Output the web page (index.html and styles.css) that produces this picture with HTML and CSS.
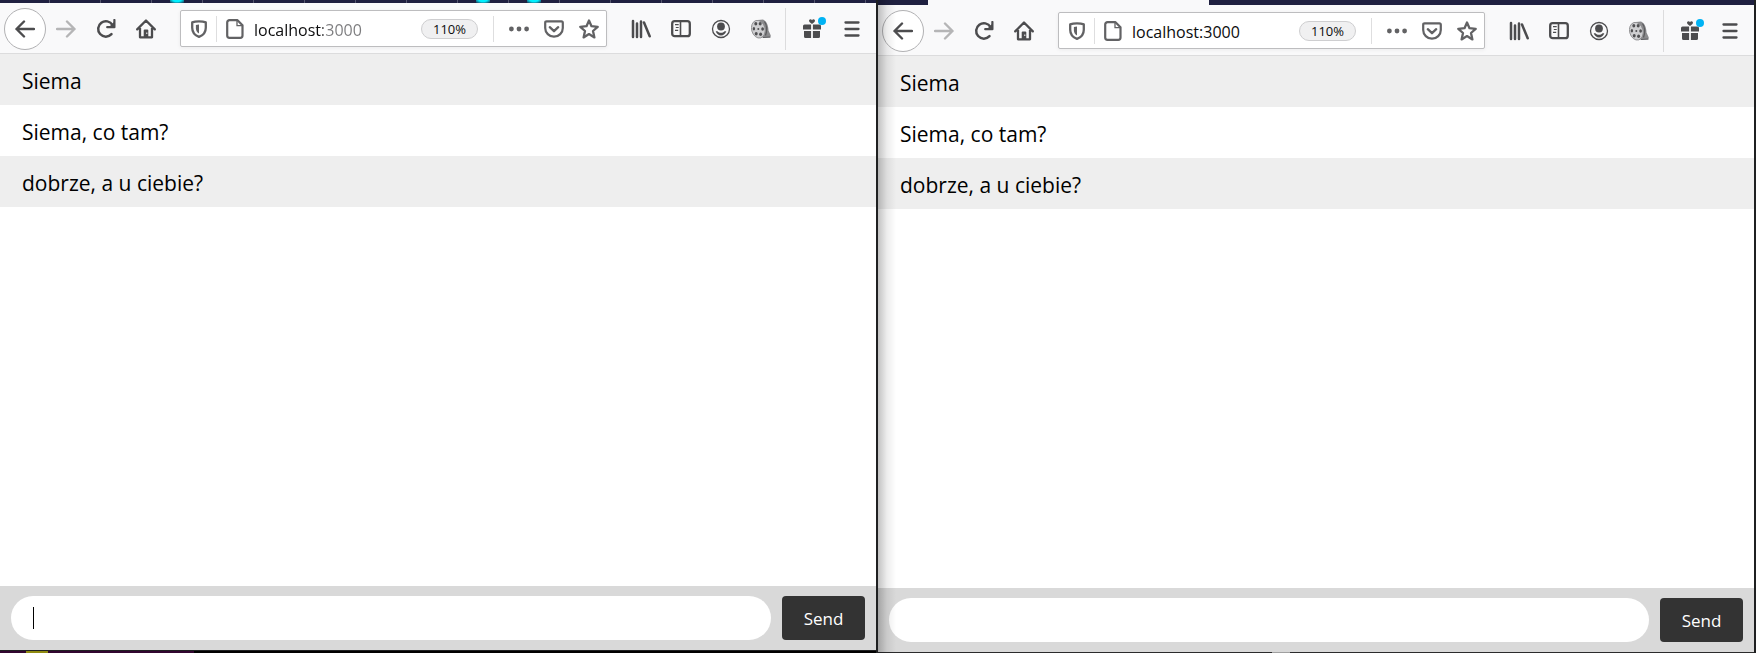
FILE: index.html
```html
<!DOCTYPE html>
<html lang="pl">
<head>
<meta charset="utf-8">
<title>Chat</title>
<link rel="stylesheet" href="styles.css">
</head>
<body>
<svg class="sprite" aria-hidden="true">
  <symbol id="i-back" viewBox="0 0 20 20"><path d="M19 10H1.500M9 2.500L1.500 10L9 17.500" fill="none" stroke="currentColor" stroke-width="2.400" stroke-linecap="round" stroke-linejoin="round"/></symbol>
  <symbol id="i-forward" viewBox="0 0 20 20"><path d="M1 10H18.500M11 2.500L18.500 10L11 17.500" fill="none" stroke="currentColor" stroke-width="2.400" stroke-linecap="round" stroke-linejoin="round"/></symbol>
  <symbol id="i-reload" viewBox="0 0 20 20"><path d="M15.500 15.200A7.700 7.700 0 1 1 16.500 6" fill="none" stroke="currentColor" stroke-width="2.500" stroke-linecap="round"/><path d="M18.400 1V8.200H11.200" fill="none" stroke="currentColor" stroke-width="2.200" stroke-linecap="round" stroke-linejoin="round"/><path d="M18 3v5h-5z" fill="currentColor"/></symbol>
  <symbol id="i-home" viewBox="0 0 20 20"><path d="M1.200 10.400L10 1.500L18.800 10.400M4 9V18.300H16V9" fill="none" stroke="currentColor" stroke-width="2.300" stroke-linecap="round" stroke-linejoin="round"/><path d="M7.700 18v-6.500q0-1 1-1h2.600q1 0 1 1V18z" fill="currentColor"/><path d="M10.300 13.500h1v1.500h-1z" fill="#f9f9fa"/></symbol>
  <symbol id="i-shield" viewBox="0 0 20 20"><path d="M10 2.300c2.500 0 4.900.300 6.800 1.100v5.400c0 4.700-2.900 7.700-6.800 9.100c-3.900-1.400-6.800-4.400-6.800-9.100v-5.400C5.100 2.600 7.500 2.300 10 2.300z" fill="none" stroke="currentColor" stroke-width="2.300" stroke-linejoin="round"/><path d="M10 5.500v9c-2.200-1.300-3.100-3.100-3.100-5.300V6z" fill="currentColor"/></symbol>
  <symbol id="i-page" viewBox="0 0 20 20"><path d="M4.500 1.200h8l5 5v10.300a2.300 2.300 0 0 1-2.300 2.300H4.500a2.300 2.300 0 0 1-2.300-2.300v-13a2.300 2.300 0 0 1 2.300-2.300z" fill="none" stroke="currentColor" stroke-width="2.200" stroke-linejoin="round"/><path d="M12 2v4.700h5" fill="none" stroke="currentColor" stroke-width="1.300"/></symbol>
  <symbol id="i-dots" viewBox="0 0 20 20"><circle cx="2.400" cy="10" r="2.400" fill="currentColor"/><circle cx="10" cy="10" r="2.400" fill="currentColor"/><circle cx="17.600" cy="10" r="2.400" fill="currentColor"/></symbol>
  <symbol id="i-pocket" viewBox="0 0 20 20"><path d="M2.600 2.300h14.800q1.400 0 1.400 1.400v5.200a8.800 8.800 0 0 1-17.600 0V3.700q0-1.400 1.400-1.400z" fill="none" stroke="currentColor" stroke-width="2.200"/><path d="M5.800 8.200L10 12.200L14.200 8.200" fill="none" stroke="currentColor" stroke-width="2.300" stroke-linecap="round" stroke-linejoin="round"/></symbol>
  <symbol id="i-star" viewBox="0 0 20 20"><path d="M10 1.500l2.500 5.700 6.200.600-4.700 4.200 1.400 6.400L10 15.100l-5.400 3.300L6 12 1.300 7.800l6.200-.600z" fill="none" stroke="currentColor" stroke-width="2.300" stroke-linejoin="round"/></symbol>
  <symbol id="i-library" viewBox="0 0 20 20"><path d="M2 2V18M6 4.500V18M10 2.500V18M13 3.500L18.700 17.300" fill="none" stroke="currentColor" stroke-width="2.500" stroke-linecap="round"/></symbol>
  <symbol id="i-sidebar" viewBox="0 0 20 20"><rect x="1.200" y="2.200" width="17.600" height="15" rx="2.500" fill="none" stroke="currentColor" stroke-width="2.300"/><path d="M9.500 2v15" stroke="currentColor" stroke-width="1.600"/><path d="M4 5.700h3.700M4.800 8.500h2.900M4 11.300h3.200" stroke="currentColor" stroke-width="1.200"/></symbol>
  <symbol id="i-account" viewBox="0 0 20 20"><circle cx="10" cy="10" r="8.500" fill="none" stroke="currentColor" stroke-width="1.300"/><circle cx="10" cy="7.500" r="3.900" fill="currentColor"/><path d="M4.700 12.300c1.400-.500 2.300.300 3 .900 1.300.800 3.300.800 4.600 0 .700-.600 1.600-1.400 3-.900-.900 2.600-2.900 4.200-5.300 4.200s-4.400-1.600-5.300-4.200z" fill="currentColor"/></symbol>
  <symbol id="i-reel" viewBox="0 0 20 20"><path d="M7 1l5-.500c3.500 1.500 5.500 6 5.500 11l2.300 5-.800 2H8z" fill="#8b8b8d"/><path d="M12 18.500l7.500-.500" stroke="#5a5a5c" stroke-width="1.200"/><path d="M13.500 2.500c2 3 3 8 1 14" fill="none" stroke="#5d5d5f" stroke-width="1.300"/><ellipse cx="7.300" cy="10.200" rx="6.700" ry="9" fill="#cfcfd1" stroke="#88888a" stroke-width=".8" transform="rotate(-15 7.300 10.200)"/><g fill="#505052"><ellipse cx="4.800" cy="4.700" rx="1.500" ry="1.700"/><ellipse cx="9.200" cy="4.700" rx="1.500" ry="1.700"/><ellipse cx="11.600" cy="10" rx="1.400" ry="1.800"/><ellipse cx="9.600" cy="15.300" rx="1.500" ry="1.700"/><ellipse cx="5.200" cy="14.700" rx="1.500" ry="1.700"/><ellipse cx="2.900" cy="9.700" rx="1.200" ry="1.700"/><circle cx="7.300" cy="9.900" r="1"/></g></symbol>
  <symbol id="i-gift" viewBox="0 0 20 20"><path d="M2.500 5.500h6.600v5H1v-3.500q0-1.500 1.500-1.500zM10.900 5.500h6.600q1.500 0 1.500 1.500v3.500h-8.100zM2 12h7.100v7H3.500Q2 19 2 17.500zM10.900 12H18v5.500q0 1.500-1.500 1.500h-5.600z" fill="currentColor"/><path d="M10 4.900C7.500 3.400 6.700 2.300 7.200 1.100 7.800-.100 9.500.100 10 1.300 10.500.100 12.200-.100 12.800 1.100c.500 1.200-.300 2.300-2.800 3.800z" fill="currentColor"/></symbol>
  <symbol id="i-menu" viewBox="0 0 20 20"><path d="M3.500 3.500h13M3.500 10h13M3.500 16.500h13" stroke="currentColor" stroke-width="2.300" stroke-linecap="round"/></symbol>
</svg>
<div class="desktop">
  <section class="window window-left" aria-label="Chat window 1">
    <div class="strip strip-desktop"><i class="glow glow-a"></i><i class="glow glow-b"></i><i class="glow glow-c"></i></div>
    <header class="toolbar">
      <button class="tool back" aria-label="Back"><svg><use href="#i-back"/></svg></button>
      <button class="tool forward" aria-label="Forward"><svg><use href="#i-forward"/></svg></button>
      <button class="tool" aria-label="Reload"><svg><use href="#i-reload"/></svg></button>
      <button class="tool" aria-label="Home"><svg><use href="#i-home"/></svg></button>
      <div class="urlbar">
        <button class="mini" aria-label="Protection"><svg><use href="#i-shield"/></svg></button>
        <span class="rule"></span>
        <button class="mini" aria-label="Site information"><svg><use href="#i-page"/></svg></button>
        <input class="address address-dim" type="text" aria-label="Address" value="localhost:3000">
        <button class="zoom">110%</button>
        <span class="rule"></span>
        <div class="actions">
          <button class="mini" aria-label="Page actions"><svg><use href="#i-dots"/></svg></button>
          <button class="mini" aria-label="Save to Pocket"><svg><use href="#i-pocket"/></svg></button>
          <button class="mini" aria-label="Bookmark"><svg><use href="#i-star"/></svg></button>
        </div>
      </div>
      <button class="tool" aria-label="Library"><svg><use href="#i-library"/></svg></button>
      <button class="tool" aria-label="Sidebars"><svg><use href="#i-sidebar"/></svg></button>
      <button class="tool" aria-label="Account"><svg><use href="#i-account"/></svg></button>
      <button class="tool" aria-label="Video extension"><svg><use href="#i-reel"/></svg></button>
      <span class="divider"></span>
      <button class="tool gift" aria-label="What's new"><svg><use href="#i-gift"/></svg><i class="badge"></i></button>
      <button class="tool" aria-label="Menu"><svg><use href="#i-menu"/></svg></button>
    </header>
    <main class="chat">
      <ul class="messages">
        <li>Siema</li>
        <li>Siema, co tam?</li>
        <li>dobrze, a u ciebie?</li>
      </ul>
      <form class="composer">
        <div class="field"><input class="message" type="text" aria-label="Message" autocomplete="off"><i class="caret"></i></div>
        <button class="send" type="button">Send</button>
      </form>
    </main>
    <div class="under under-left"><i class="under-icon"></i></div>
  </section>
  <section class="window window-right" aria-label="Chat window 2">
    <div class="strip strip-tabs"><i class="tab"></i></div>
    <header class="toolbar">
      <button class="tool back" aria-label="Back"><svg><use href="#i-back"/></svg></button>
      <button class="tool forward" aria-label="Forward"><svg><use href="#i-forward"/></svg></button>
      <button class="tool" aria-label="Reload"><svg><use href="#i-reload"/></svg></button>
      <button class="tool" aria-label="Home"><svg><use href="#i-home"/></svg></button>
      <div class="urlbar">
        <button class="mini" aria-label="Protection"><svg><use href="#i-shield"/></svg></button>
        <span class="rule"></span>
        <button class="mini" aria-label="Site information"><svg><use href="#i-page"/></svg></button>
        <input class="address" type="text" aria-label="Address" value="localhost:3000">
        <button class="zoom">110%</button>
        <span class="rule"></span>
        <div class="actions">
          <button class="mini" aria-label="Page actions"><svg><use href="#i-dots"/></svg></button>
          <button class="mini" aria-label="Save to Pocket"><svg><use href="#i-pocket"/></svg></button>
          <button class="mini" aria-label="Bookmark"><svg><use href="#i-star"/></svg></button>
        </div>
      </div>
      <button class="tool" aria-label="Library"><svg><use href="#i-library"/></svg></button>
      <button class="tool" aria-label="Sidebars"><svg><use href="#i-sidebar"/></svg></button>
      <button class="tool" aria-label="Account"><svg><use href="#i-account"/></svg></button>
      <button class="tool" aria-label="Video extension"><svg><use href="#i-reel"/></svg></button>
      <span class="divider"></span>
      <button class="tool gift" aria-label="What's new"><svg><use href="#i-gift"/></svg><i class="badge"></i></button>
      <button class="tool" aria-label="Menu"><svg><use href="#i-menu"/></svg></button>
    </header>
    <main class="chat">
      <ul class="messages">
        <li>Siema</li>
        <li>Siema, co tam?</li>
        <li>dobrze, a u ciebie?</li>
      </ul>
      <form class="composer">
        <div class="field"><input class="message" type="text" aria-label="Message" autocomplete="off"></div>
        <button class="send" type="button">Send</button>
      </form>
    </main>
    <div class="under under-right"></div>
  </section>
</div>
</body>
</html>
```
FILE: styles.css
```css
* {
  box-sizing: border-box;
}

body {
  margin: 0;
  font-family: "Open Sans", "Noto Sans", sans-serif;
  color: #000;
}

button,
input {
  margin: 0;
  padding: 0;
  border: 0;
  background: none;
  font-family: inherit;
  outline: none;
}

.sprite {
  position: absolute;
  width: 0;
  height: 0;
}

.desktop {
  display: grid;
  grid-template-columns: 1fr 1fr;
  min-height: 100vh;
}

.window {
  position: relative;
  display: flex;
  flex-direction: column;
  min-width: 0;
  background: #fff;
  border-right: 2px solid #1f2021;
}

/* Shadow cast by the left window over the right one */
.window-right::before {
  content: "";
  position: absolute;
  inset: 0 auto 0 0;
  width: 18px;
  background: linear-gradient(to right, rgba(0, 0, 0, 0.24), rgba(0, 0, 0, 0.07) 50%, transparent);
  pointer-events: none;
  z-index: 1;
}

.strip {
  position: relative;
  overflow: hidden;
  background: #1f2040;
}

.strip-desktop {
  height: 3px;
  background: repeating-linear-gradient(to right, #1f2040 0 49px, #55566e 49px 50px, #1f2040 50px 51px);
}

.strip-tabs {
  display: flex;
  height: 5px;
  padding-left: 50px;
}

.tab {
  width: 34%;
  background: #f9f9fa;
}

.glow {
  position: absolute;
  top: 0;
  width: 14px;
  height: 3px;
  background: radial-gradient(ellipse at top, #00f0ff 40%, transparent);
}

.glow-a { left: 170px; }
.glow-b { left: 476px; }
.glow-c { left: 527px; }

.toolbar {
  display: flex;
  align-items: center;
  height: 51px;
  padding: 1px 4px 0;
  background: #f9f9fa;
  border-bottom: 1px solid #dcdcdd;
}

.tool {
  position: relative;
  display: flex;
  flex: none;
  align-items: center;
  justify-content: center;
  width: 40px;
  height: 40px;
  color: #4c4c4e;
}

.tool svg,
.mini svg {
  width: 20px;
  height: 20px;
}

.back {
  width: 42px;
  height: 42px;
  border: 1px solid #b1b1b3;
  border-radius: 50%;
  background: #fff;
}

.forward {
  color: #b5b5b6;
}

.urlbar {
  display: flex;
  flex: 1;
  align-items: center;
  min-width: 0;
  height: 37px;
  margin: 0 14px;
  padding: 0 7px 0 8px;
  background: #fff;
  border: 1px solid #bdbdbf;
  border-radius: 2px;
  box-shadow: 0 1px 4px rgba(0, 0, 0, 0.06);
}

.mini {
  display: flex;
  flex: none;
  color: #626264;
}

.rule {
  flex: none;
  width: 1px;
  height: 26px;
  margin: 0 8px 0 7px;
  background: #dededf;
}

.address {
  flex: 1;
  min-width: 0;
  height: 34px;
  margin-left: 9px;
  padding-top: 2px;
  font-size: 16px;
  color: #0c0c0d;
}

.address-dim {
  color: transparent;
  background: linear-gradient(to right, #0c0c0d 69px, #7b7b7d 69px);
  -webkit-background-clip: text;
  background-clip: text;
}

.zoom {
  flex: none;
  width: 57px;
  height: 20px;
  margin-right: 8px;
  border: 1px solid #ceced0;
  border-radius: 10px;
  background: #f0f0f1;
  font-size: 13px;
  line-height: 18px;
  color: #0c0c0d;
}

.actions {
  display: flex;
  gap: 15px;
  margin-left: 7px;
}

.divider {
  flex: none;
  width: 1px;
  height: 42px;
  margin: 0 6px 0 4px;
  background: #dcdcdd;
}

.badge {
  position: absolute;
  top: 8px;
  right: 6px;
  width: 8px;
  height: 8px;
  border-radius: 50%;
  background: #00b3f4;
}

.chat {
  display: flex;
  flex: 1;
  flex-direction: column;
}

.messages {
  flex: 1;
  margin: 0;
  padding: 0;
  list-style: none;
}

.messages li {
  padding: 12px 22px 9px;
  font-size: 21px;
  line-height: 30px;
}

.messages li:nth-child(odd) {
  background: #eee;
}

.composer {
  display: flex;
  gap: 11px;
  padding: 10px 11px;
  background: #d9d9d9;
}

.field {
  position: relative;
  flex: 1;
  min-width: 0;
}

.message {
  display: block;
  width: 100%;
  height: 44px;
  padding: 0 22px;
  border-radius: 22px;
  background: #fff;
  font-size: 18px;
}

.caret {
  position: absolute;
  top: 11px;
  left: 22px;
  width: 1px;
  height: 22px;
  background: #000;
}

.send {
  width: 83px;
  height: 44px;
  border-radius: 4px;
  background: #333;
  font-size: 17px;
  color: #fff;
}

.under-left {
  height: 3px;
  padding-left: 26px;
  border-top: 1px solid #1f2021;
  background: linear-gradient(to right, #31062f 194px, #000 194px);
}

.under-icon {
  display: block;
  width: 22px;
  height: 2px;
  background: #8f8a10;
}

.under-right {
  height: 1px;
  background: linear-gradient(to right, #2b2b2c 45%, #a0a0a0 45% 47%, #2b2b2c 47%);
}
```
